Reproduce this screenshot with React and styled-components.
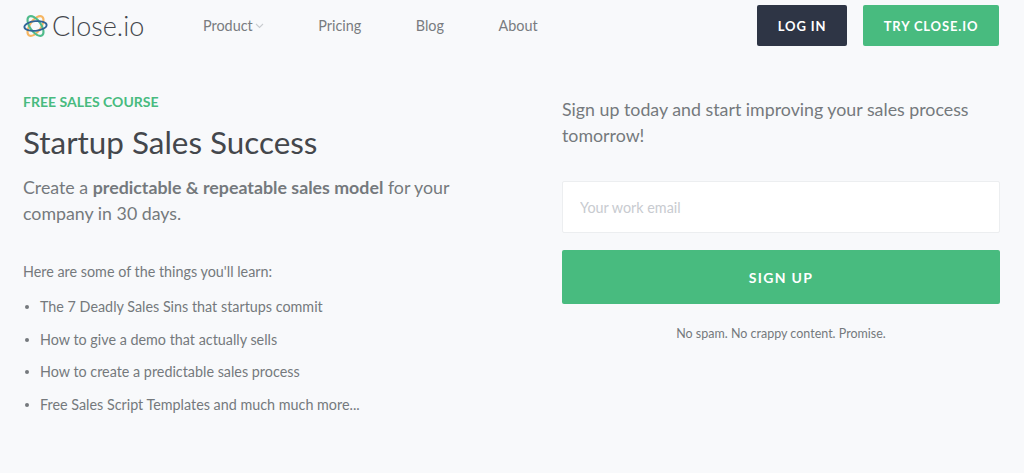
import React from "react";
import styled, { createGlobalStyle } from "styled-components";

const GlobalStyle = createGlobalStyle`
  html, body {
    margin: 0;
    background: #f8f9fb;
  }
  * {
    box-sizing: border-box;
  }
`;

const Page = styled.div`
  width: 1024px;
  height: 473px;
  overflow: hidden;
  background: #f8f9fb;
  font-family: Lato, "Liberation Sans", sans-serif;
  color: #75797d;
`;

const Header = styled.header`
  display: flex;
  align-items: center;
  height: 51px;
  padding: 0 25px 0 23px;
`;

const Brand = styled.div`
  display: flex;
  align-items: center;
  gap: 4px;
  width: 180px;
  font-size: 27px;
  font-weight: 300;
  color: #44474c;
`;

const Nav = styled.nav`
  display: flex;
  align-items: center;
  gap: 54.5px;
  flex: 1;
`;

const NavLink = styled.a`
  display: flex;
  align-items: center;
  gap: 2px;
  font-size: 14.4px;
  color: #797c80;
`;

const Button = styled.button`
  border: 0;
  border-radius: 2px;
  color: #fff;
  font-family: inherit;
  font-weight: 700;
  text-transform: uppercase;
  background: ${props => (props.dark ? "#2e3545" : "#48bb7f")};
`;

const HeaderButton = styled(Button)`
  height: 41px;
  width: ${props => props.w}px;
  margin-left: ${props => props.gap || 0}px;
  font-size: 13px;
  letter-spacing: 0.85px;
`;

const Main = styled.main`
  display: grid;
  grid-template-columns: 539px 438px;
  padding: 0 24px 0 23px;
`;

const Left = styled.section`
  padding-top: 42px;
`;

const Eyebrow = styled.div`
  font-size: 14px;
  line-height: 18px;
  font-weight: 700;
  color: #48bb7f;
`;

const Title = styled.h1`
  margin: 11px 0 0;
  font-size: 31.4px;
  line-height: 40px;
  font-weight: 400;
  color: #44474c;
`;

const Lead = styled.p`
  margin: 12px 0 0;
  width: 450px;
  font-size: 17.8px;
  line-height: 26px;
  strong {
    font-weight: 700;
  }
`;

const Intro = styled.p`
  margin: 36px 0 0;
  font-size: 14.35px;
  line-height: 20px;
`;

const List = styled.ul`
  list-style: none;
  margin: 15px 0 0;
  padding: 0;
`;

const Item = styled.li`
  position: relative;
  padding-left: 17px;
  margin-bottom: 12.6px;
  font-size: 14.35px;
  line-height: 20px;
  &::before {
    content: "";
    position: absolute;
    left: 2px;
    top: 8px;
    width: 4px;
    height: 4px;
    border-radius: 50%;
    background: #75797d;
  }
`;

const Right = styled.section`
  padding-top: 45px;
`;

const Pitch = styled.p`
  margin: 0;
  font-size: 17.8px;
  line-height: 26px;
`;

const EmailInput = styled.input`
  display: block;
  width: 100%;
  height: 52px;
  margin-top: 33px;
  padding: 0 17px;
  background: #fff;
  border: 1px solid #eceef0;
  border-radius: 2px;
  font-family: inherit;
  font-size: 14.35px;
  &::placeholder {
    color: #c8cbd0;
    opacity: 1;
  }
`;

const SignUp = styled(Button)`
  display: block;
  width: 100%;
  height: 54px;
  margin-top: 17px;
  font-size: 14px;
  letter-spacing: 1.35px;
`;

const Note = styled.p`
  margin: 22px 0 0;
  text-align: center;
  font-size: 12.5px;
  line-height: 16px;
`;

const Logo = () => (
  <svg width="25" height="26" viewBox="0 0 25 26" fill="none" strokeWidth="2.1">
    <ellipse cx="12.5" cy="13" rx="5.6" ry="11.4" stroke="#f6b662" transform="rotate(35 12.5 13)" />
    <ellipse cx="12.5" cy="13" rx="5.6" ry="11.4" stroke="#4fbb8b" transform="rotate(-35 12.5 13)" />
    <ellipse cx="12.5" cy="13" rx="11.2" ry="4.8" stroke="#2f6496" strokeWidth="1.8" transform="rotate(-6 12.5 13)" />
  </svg>
);

const Chevron = () => (
  <svg width="9" height="6" viewBox="0 0 9 6" fill="none" stroke="#c9ccd0" strokeWidth="1.1">
    <path d="M1 1l3.5 3.5L8 1" />
  </svg>
);

export default function App() {
  return (
    <Page>
      <GlobalStyle />
      <Header>
        <Brand>
          <Logo />
          Close.io
        </Brand>
        <Nav>
          <NavLink>
            Product <Chevron />
          </NavLink>
          <NavLink>Pricing</NavLink>
          <NavLink>Blog</NavLink>
          <NavLink>About</NavLink>
        </Nav>
        <HeaderButton dark w={90}>Log in</HeaderButton>
        <HeaderButton w={136} gap={16}>Try Close.io</HeaderButton>
      </Header>
      <Main>
        <Left>
          <Eyebrow>FREE SALES COURSE</Eyebrow>
          <Title>Startup Sales Success</Title>
          <Lead>
            Create a <strong>predictable &amp; repeatable sales model</strong> for your company in 30 days.
          </Lead>
          <Intro>Here are some of the things you'll learn:</Intro>
          <List>
            <Item>The 7 Deadly Sales Sins that startups commit</Item>
            <Item>How to give a demo that actually sells</Item>
            <Item>How to create a predictable sales process</Item>
            <Item>Free Sales Script Templates and much much more...</Item>
          </List>
        </Left>
        <Right>
          <Pitch>Sign up today and start improving your sales process tomorrow!</Pitch>
          <EmailInput placeholder="Your work email" />
          <SignUp>Sign up</SignUp>
          <Note>No spam. No crappy content. Promise.</Note>
        </Right>
      </Main>
    </Page>
  );
}
